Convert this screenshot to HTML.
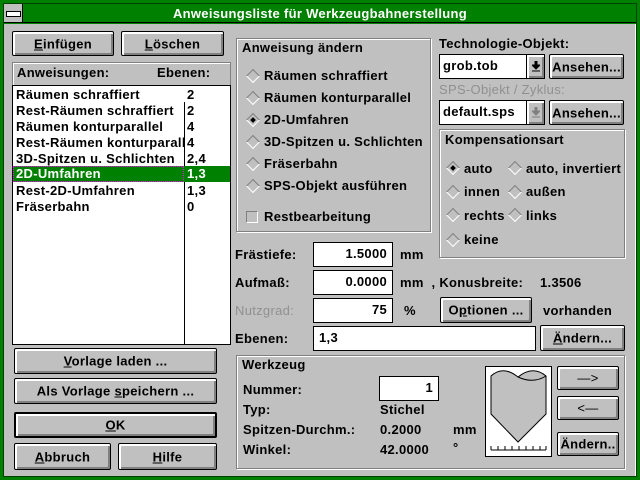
<!DOCTYPE html>
<html><head><meta charset="utf-8"><style>
*{box-sizing:border-box;margin:0;padding:0}
body{width:640px;height:480px;overflow:hidden;background:#008000;font-family:"Liberation Sans",sans-serif;font-weight:bold;font-size:13px;letter-spacing:0.3px;color:#000;position:relative}
.a{position:absolute;white-space:nowrap}
#frame{position:absolute;left:3px;top:3px;width:634px;height:474px;border:1px solid #004000}
#title{position:absolute;left:4px;top:4px;width:632px;height:19px;background:#008000;color:#fff;text-align:center;line-height:19px;font-size:13px;border-bottom:1px solid #000}
#sys{position:absolute;left:4px;top:4px;width:19px;height:19px;background:#c0c0c0;border-right:1px solid #000;border-bottom:1px solid #000}
#sys:after{content:"";position:absolute;left:2px;top:7px;width:13px;height:4px;background:#fff;border:1px solid #000}
#body{position:absolute;left:4px;top:24px;width:632px;height:452px;background:#c0c0c0;border-right:1px solid #fff}
.btn{position:absolute;background:#c0c0c0;border:1px solid #000;border-radius:2px;text-align:center;box-shadow:inset 1px 1px 0 #fff,inset 2px 2px 0 #fff,inset -1px -1px 0 #808080,inset -2px -2px 0 #808080}
.btn span{position:absolute;left:0;right:0;top:50%;transform:translateY(-50%)}
.def{border:2px solid #000}
.in{position:absolute;background:#fff;border:1px solid #000;text-align:right;padding-right:5px;line-height:22px}
.grp{position:absolute;border:1px solid #808080;box-shadow:1px 1px 0 #fff,inset 1px 1px 0 #fff}
.rad{position:absolute;width:10px;height:10px;border-left:1px solid #808080;border-top:1px solid #808080;border-right:1px solid #fff;border-bottom:1px solid #fff;transform:rotate(45deg)}
.dot{position:absolute;left:2px;top:2px;width:4px;height:4px;background:#000}
.gr{color:#808080}
u{text-decoration:underline}
.row{position:absolute;left:13px;width:216px;height:16px;line-height:16px}
</style></head><body>
<div id="frame"></div>
<div id="title">Anweisungsliste für Werkzeugbahnerstellung</div>
<div id="sys"></div>
<div id="body"></div>

<div class="btn" style="left:12px;top:31px;width:102px;height:25px"><span><u>E</u>infügen</span></div>
<div class="btn" style="left:121px;top:31px;width:103px;height:25px"><span><u>L</u>öschen</span></div>

<div class="a" style="left:12px;top:62px;width:219px;height:24px;border:1px solid #808080;border-bottom:none;box-shadow:inset 1px 1px 0 #fff"></div>
<div class="a" style="left:17px;top:65px">Anweisungen:</div>
<div class="a" style="left:157px;top:65px">Ebenen:</div>
<div class="a" style="left:12px;top:85px;width:219px;height:260px;background:#fff;border:1px solid #000"></div>
<div class="a" style="left:184px;top:102px;width:1px;height:242px;background:#000"></div>
<div class="a" style="left:13px;top:166px;width:217px;height:16px;background:#008000"></div>
<div class="a" style="left:13px;top:166px;width:171px;height:16px;border:1px dotted #ff00ff"></div>
<div class="row" style="top:87px"><span class="a" style="left:3px">Räumen schraffiert</span><span class="a" style="left:174px">2</span></div>
<div class="row" style="top:103px"><span class="a" style="left:3px">Rest-Räumen schraffiert</span><span class="a" style="left:174px">2</span></div>
<div class="row" style="top:119px"><span class="a" style="left:3px">Räumen konturparallel</span><span class="a" style="left:174px">4</span></div>
<div class="row" style="top:135px;overflow:hidden;width:171px"><span class="a" style="left:3px">Rest-Räumen konturparallel</span></div>
<div class="row" style="top:135px"><span class="a" style="left:174px">4</span></div>
<div class="row" style="top:151px"><span class="a" style="left:3px">3D-Spitzen u. Schlichten</span><span class="a" style="left:174px">2,4</span></div>
<div class="row" style="top:166px;color:#fff"><span class="a" style="left:3px">2D-Umfahren</span><span class="a" style="left:174px">1,3</span></div>
<div class="row" style="top:183px"><span class="a" style="left:3px">Rest-2D-Umfahren</span><span class="a" style="left:174px">1,3</span></div>
<div class="row" style="top:199px"><span class="a" style="left:3px">Fräserbahn</span><span class="a" style="left:174px">0</span></div>

<div class="btn" style="left:14px;top:348px;width:203px;height:26px"><span><u>V</u>orlage laden ...</span></div>
<div class="btn" style="left:14px;top:378px;width:203px;height:26px"><span>Als Vorlage <u>s</u>peichern ...</span></div>
<div class="btn def" style="left:14px;top:412px;width:203px;height:26px"><span><u>O</u>K</span></div>
<div class="btn" style="left:14px;top:443px;width:97px;height:27px"><span><u>A</u>bbruch</span></div>
<div class="btn" style="left:118px;top:443px;width:99px;height:27px"><span><u>H</u>ilfe</span></div>

<div class="grp" style="left:236px;top:38px;width:195px;height:194px"></div>
<div class="a" style="left:242px;top:40px">Anweisung ändern</div>
<div class="rad" style="left:248px;top:71px"></div><div class="a" style="left:264px;top:68px">Räumen schraffiert</div>
<div class="rad" style="left:248px;top:93px"></div><div class="a" style="left:264px;top:90px">Räumen konturparallel</div>
<div class="rad" style="left:248px;top:115px"><div class="dot"></div></div><div class="a" style="left:264px;top:112px">2D-Umfahren</div>
<div class="rad" style="left:248px;top:137px"></div><div class="a" style="left:264px;top:134px">3D-Spitzen u. Schlichten</div>
<div class="rad" style="left:248px;top:159px"></div><div class="a" style="left:264px;top:156px">Fräserbahn</div>
<div class="rad" style="left:248px;top:181px"></div><div class="a" style="left:264px;top:178px">SPS-Objekt ausführen</div>
<div class="a" style="left:246px;top:211px;width:12px;height:12px;border:1px solid #808080;border-right-color:#fff;border-bottom-color:#fff"></div>
<div class="a" style="left:264px;top:209px">Restbearbeitung</div>

<div class="a" style="left:439px;top:36px">Technologie-Objekt:</div>
<div class="a" style="left:439px;top:54px;width:106px;height:25px;background:#fff;border:1px solid #000;padding-left:3px;line-height:22px">grob.tob</div>
<div class="btn" style="left:526px;top:54px;width:19px;height:25px;border-radius:0"><svg class="a" style="left:5px;top:6px" width="8" height="11"><path d="M3 0h2v4h3l-4 4l-4-4h3z M0 10h8" fill="#000" stroke="#000" stroke-width="1"/></svg></div>
<div class="btn" style="left:549px;top:54px;width:75px;height:25px"><span>Ansehen...</span></div>
<div class="a gr" style="left:439px;top:82px;font-weight:normal;color:#909090">SPS-Objekt / Zyklus:</div>
<div class="a" style="left:439px;top:100px;width:106px;height:25px;background:#fff;border:1px solid #000;padding-left:3px;line-height:22px">default.sps</div>
<div class="btn" style="left:526px;top:100px;width:19px;height:25px;border-radius:0"><svg class="a" style="left:5px;top:6px" width="8" height="11"><path d="M3 0h2v4h3l-4 4l-4-4h3z M0 10h8" fill="#808080" stroke="#808080" stroke-width="1"/></svg></div>
<div class="btn" style="left:549px;top:100px;width:75px;height:25px"><span>Ansehen...</span></div>

<div class="grp" style="left:439px;top:129px;width:186px;height:129px"></div>
<div class="a" style="left:445px;top:132px">Kompensationsart</div>
<div class="rad" style="left:448px;top:163px"><div class="dot"></div></div><div class="a" style="left:464px;top:161px">auto</div>
<div class="rad" style="left:510px;top:163px"></div><div class="a" style="left:526px;top:161px">auto, invertiert</div>
<div class="rad" style="left:448px;top:187px"></div><div class="a" style="left:464px;top:184px">innen</div>
<div class="rad" style="left:510px;top:187px"></div><div class="a" style="left:526px;top:184px">außen</div>
<div class="rad" style="left:448px;top:210px"></div><div class="a" style="left:464px;top:208px">rechts</div>
<div class="rad" style="left:510px;top:210px"></div><div class="a" style="left:526px;top:208px">links</div>
<div class="rad" style="left:448px;top:235px"></div><div class="a" style="left:464px;top:232px">keine</div>

<div class="a" style="left:235px;top:247px">Frästiefe:</div>
<div class="in" style="left:313px;top:242px;width:80px;height:25px">1.5000</div>
<div class="a" style="left:400px;top:247px">mm</div>
<div class="a" style="left:235px;top:275px">Aufmaß:</div>
<div class="in" style="left:313px;top:270px;width:80px;height:25px">0.0000</div>
<div class="a" style="left:400px;top:275px">mm &nbsp;, Konusbreite:</div>
<div class="a" style="left:540px;top:275px">1.3506</div>
<div class="a" style="left:235px;top:303px;font-weight:normal;color:#909090">Nutzgrad:</div>
<div class="in" style="left:313px;top:298px;width:80px;height:25px">75</div>
<div class="a" style="left:404px;top:303px">%</div>
<div class="btn" style="left:440px;top:297px;width:92px;height:26px"><span>O<u>p</u>tionen ...</span></div>
<div class="a" style="left:543px;top:303px">vorhanden</div>
<div class="a" style="left:235px;top:331px">Ebenen:</div>
<div class="in" style="left:313px;top:326px;width:223px;height:25px;text-align:left;padding-left:5px">1,3</div>
<div class="btn" style="left:540px;top:325px;width:85px;height:26px"><span><u>Ä</u>ndern...</span></div>

<div class="grp" style="left:236px;top:355px;width:389px;height:114px"></div>
<div class="a" style="left:242px;top:357px">Werkzeug</div>
<div class="a" style="left:243px;top:382px">Nummer:</div>
<div class="in" style="left:379px;top:376px;width:60px;height:25px">1</div>
<div class="a" style="left:243px;top:402px">Typ:</div><div class="a" style="left:380px;top:402px">Stichel</div>
<div class="a" style="left:243px;top:422px">Spitzen-Durchm.:</div><div class="a" style="left:380px;top:422px">0.2000</div><div class="a" style="left:453px;top:422px">mm</div>
<div class="a" style="left:243px;top:442px">Winkel:</div><div class="a" style="left:380px;top:442px">42.0000</div><div class="a" style="left:453px;top:440px">°</div>
<svg class="a" style="left:485px;top:366px" width="67" height="91" viewBox="0 0 67 91">
<rect x="0.5" y="0.5" width="66" height="90" fill="#fff" stroke="#000"/>
<path d="M6 10 Q18 -1 33 11 Q48 -1 61 10 L61 48 L33 76 L6 48 Z" fill="#c0c0c0" stroke="#000"/>
<path d="M33 11 Q48 18 61 10" fill="none" stroke="#000"/>
<path d="M6 84 H61 M6 80V84 M13 80V84 M20 80V84 M27 80V84 M34 80V84 M41 80V84 M48 80V84 M55 80V84 M61 80V84" stroke="#000" fill="none"/>
</svg>
<div class="btn" style="left:557px;top:366px;width:62px;height:24px"><span style="font-weight:normal">—&gt;</span></div>
<div class="btn" style="left:557px;top:396px;width:62px;height:24px"><span style="font-weight:normal">&lt;—</span></div>
<div class="btn" style="left:557px;top:432px;width:62px;height:24px"><span>Ändern..</span></div>
</body></html>
